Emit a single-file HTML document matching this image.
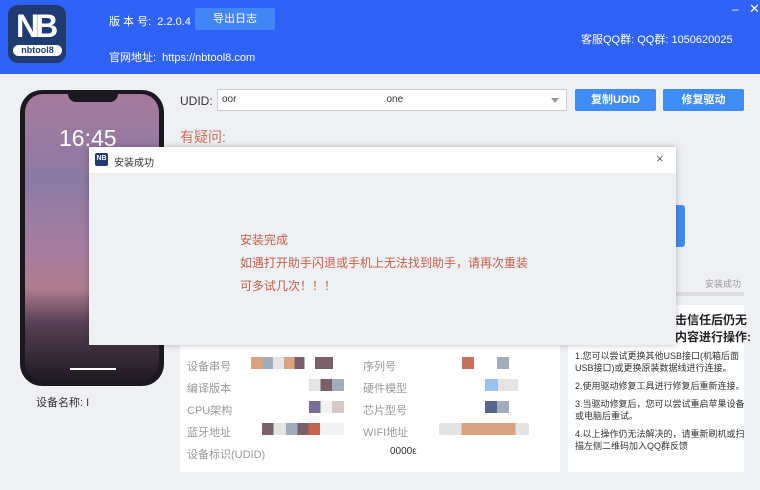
<!DOCTYPE html>
<html><head><meta charset="utf-8"><style>
*{margin:0;padding:0;box-sizing:border-box}
body{width:760px;height:490px;overflow:hidden;background:#eff0f4;font-family:"Liberation Sans","Noto Sans CJK SC",sans-serif;position:relative;font-size:11px}
.a{position:absolute}
.hdr{left:0;top:0;width:760px;height:74px;background:#2f62f6}
.w{color:#fff}
.btn{background:#3f8cf5;color:#fff;text-align:center;border-radius:2px}
.lbl{color:#999;font-size:11px}
</style></head><body>
<div class="a hdr"></div>
<div class="a" style="left:8px;top:5px;width:58px;height:58px;background:#1f3b72;border-radius:10px"></div>
<div class="a w" style="left:16px;top:8px;font-size:32px;font-weight:bold;letter-spacing:-4px;font-family:'Liberation Sans',sans-serif">NB</div>
<div class="a" style="left:13px;top:45px;width:49px;height:11px;background:#fff;border-radius:6px;color:#1f3b72;font-size:9px;font-weight:bold;text-align:center;line-height:11px">nbtool8</div>
<div class="a w" style="left:109px;top:13px;font-size:11px">版 本 号:&nbsp; 2.2.0.4</div>
<div class="a btn" style="left:195px;top:8px;width:80px;height:22px;line-height:22px;font-size:11px;background:#4286f6">导出日志</div>
<div class="a w" style="left:109px;top:49px;font-size:11px">官网地址:&nbsp; https://nbtool8.com</div>
<div class="a w" style="left:581px;top:31px;font-size:11px">客服QQ群: QQ群: 1050620025</div>
<div class="a w" style="left:732px;top:2px;font-size:12px">–</div>
<div class="a w" style="left:749px;top:1px;font-size:13px">✕</div>

<div class="a" style="left:20px;top:90px;width:144px;height:296px;background:#1b1820;border-radius:22px"></div>
<div class="a" style="left:25px;top:94px;width:134px;height:286px;border-radius:18px;background:linear-gradient(180deg,#a67a9c 0%,#8b7aa4 30%,#a77d9f 55%,#b07c90 68%,#574057 80%,#201a22 100%)"></div>
<div class="a" style="left:68px;top:93px;width:50px;height:9px;background:#1b1820;border-radius:0 0 8px 8px"></div>
<div class="a w" style="left:59px;top:125px;font-size:23px;font-weight:300">16:45</div>
<div class="a" style="left:70px;top:368px;width:46px;height:2px;background:#fff"></div>
<div class="a" style="left:36px;top:394px;color:#333;font-size:11px">设备名称: I</div>

<div class="a" style="left:180px;top:94px;color:#333;font-size:12px">UDID:</div>
<div class="a" style="left:217px;top:89px;width:350px;height:22px;background:#fff;border:1px solid #ccc;font-size:10px;line-height:20px;padding-left:4px;color:#333">oor<span style="margin-left:150px">one</span></div>
<div class="a" style="left:551px;top:98px;border:4px solid transparent;border-top:5px solid #999"></div>
<div class="a btn" style="left:575px;top:89px;width:81px;height:22px;line-height:22px;font-weight:bold">复制UDID</div>
<div class="a btn" style="left:663px;top:89px;width:81px;height:22px;line-height:22px;font-weight:bold">修复驱动</div>
<div class="a" style="left:180px;top:127px;color:#c8705a;font-size:14px">有疑问:</div>
<div class="a" style="left:670px;top:205px;width:15px;height:42px;background:#3f8cf5;border-radius:0 3px 3px 0"></div>
<div class="a" style="left:705px;top:277px;color:#999;font-size:9px">安装成功</div>
<div class="a" style="left:580px;top:292px;width:164px;height:4px;background:#ddd"></div>

<div class="a" style="left:180px;top:300px;width:380px;height:172px;background:#fff"></div>
<div class="a lbl" style="left:187px;top:358px">设备串号</div>
<div class="a lbl" style="left:187px;top:380px">编译版本</div>
<div class="a lbl" style="left:187px;top:402px">CPU架构</div>
<div class="a lbl" style="left:187px;top:424px">蓝牙地址</div>
<div class="a lbl" style="left:187px;top:446px">设备标识(UDID)</div>
<div class="a lbl" style="left:363px;top:358px">序列号</div>
<div class="a lbl" style="left:363px;top:380px">硬件模型</div>
<div class="a lbl" style="left:363px;top:402px">芯片型号</div>
<div class="a lbl" style="left:363px;top:424px">WIFI地址</div>
<div class="a" style="left:390px;top:446px;font-size:10px;color:#333">0000ε</div>
<div class="a" style="left:251px;top:357px;width:82px;height:12px;background:linear-gradient(90deg,#d9a280 0 14%,#a1acbd 14% 27%,#e4e4e4 27% 40%,#d9a280 40% 53%,#7a5f6a 53% 65%,#fff 65% 78%,#7a6068 78%)"></div>
<div class="a" style="left:309px;top:379px;width:35px;height:12px;background:linear-gradient(90deg,#e4e4e4 0 33%,#7a6068 33% 66%,#a1acbd 66%)"></div>
<div class="a" style="left:309px;top:401px;width:35px;height:12px;background:linear-gradient(90deg,#7a6f9a 0 33%,#f2f2f2 33% 66%,#d5c8c6 66%)"></div>
<div class="a" style="left:262px;top:423px;width:82px;height:12px;background:linear-gradient(90deg,#7a6068 0 14%,#e4e4e4 14% 29%,#a1acbd 29% 43%,#7a6068 43% 57%,#c8644c 57% 71%,#f2f2f2 71%)"></div>
<div class="a" style="left:462px;top:357px;width:12px;height:12px;background:#c8705a"></div>
<div class="a" style="left:497px;top:357px;width:12px;height:12px;background:#a1acbd"></div>
<div class="a" style="left:485px;top:379px;width:33px;height:12px;background:linear-gradient(90deg,#9cc0ee 0 40%,#e4e4e4 40%)"></div>
<div class="a" style="left:485px;top:401px;width:24px;height:12px;background:linear-gradient(90deg,#5a628e 0 50%,#a1acbd 50%)"></div>
<div class="a" style="left:439px;top:423px;width:90px;height:12px;background:linear-gradient(90deg,#e4e4e4 0 25%,#d9a280 25% 85%,#e4e4e4 85%)"></div>

<div class="a" style="left:568px;top:305px;width:176px;height:167px;background:#fff"></div>
<div class="a" style="left:675px;top:312px;font-size:12px;font-weight:bold;color:#222;line-height:17px">击信任后仍无<br>内容进行操作:</div>
<div class="a" style="left:575px;top:350px;font-size:9px;color:#333;line-height:12px;width:170px">1.您可以尝试更换其他USB接口(机箱后面USB接口)或更换原装数据线进行连接。<br><div style="height:6px"></div>2.使用驱动修复工具进行修复后重新连接。<br><div style="height:6px"></div>3.当驱动修复后，您可以尝试重启苹果设备或电脑后重试。<br><div style="height:6px"></div>4.以上操作仍无法解决的，请重新刷机或扫描左侧二维码加入QQ群反馈</div>

<div class="a" style="left:89px;top:147px;width:587px;height:198px;background:#eff0f4;box-shadow:0 0 6px rgba(0,0,0,.25)"></div>
<div class="a" style="left:89px;top:147px;width:587px;height:26px;background:#fff"></div>
<div class="a" style="left:95px;top:153px;width:13px;height:13px;background:#1f3b72;border-radius:2px;color:#fff;font-size:7px;font-weight:bold;text-align:center;line-height:11px">NB</div>
<div class="a" style="left:114px;top:154px;font-size:10px;color:#333">安装成功</div>
<div class="a" style="left:656px;top:151px;font-size:13px;color:#666">×</div>
<div class="a" style="left:240px;top:229px;font-size:12px;color:#c0604a;line-height:23px">安装完成<br>如遇打开助手闪退或手机上无法找到助手，请再次重装<br>可多试几次！！！</div>
</body></html>
